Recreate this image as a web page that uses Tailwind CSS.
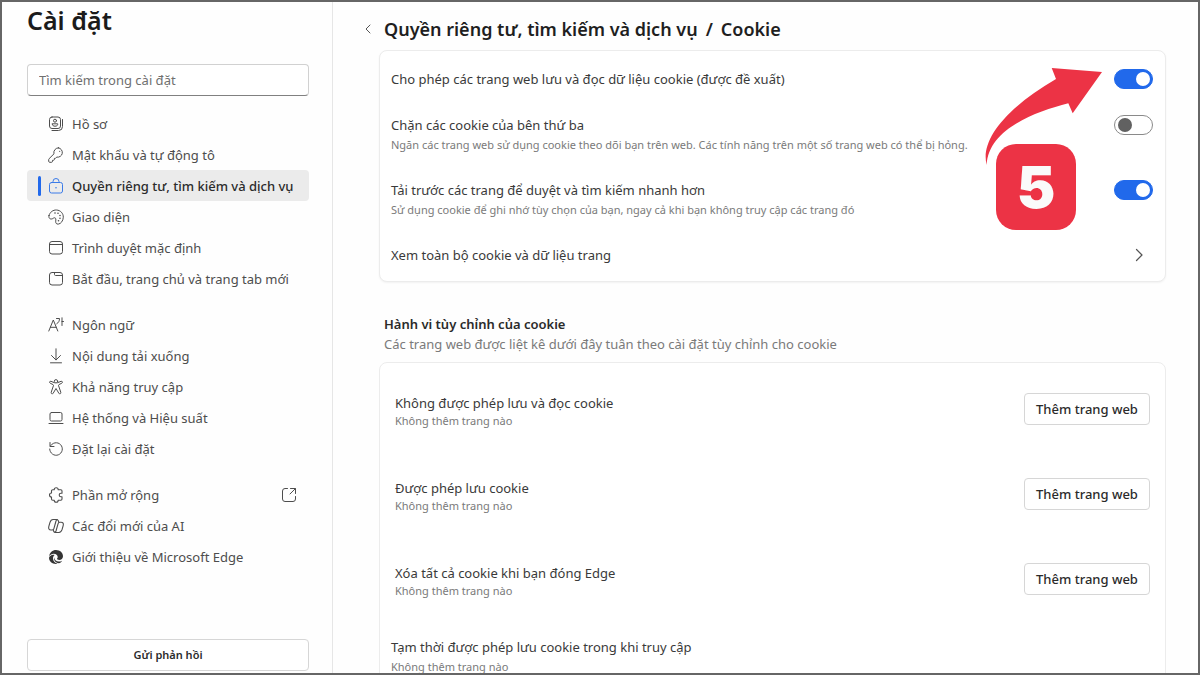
<!DOCTYPE html>
<html lang="vi">
<head>
    <meta charset="UTF-8">
    <meta name="viewport" content="width=device-width, initial-scale=1.0">
    <title>Cài đặt</title>
    <script src="https://cdn.jsdelivr.net/npm/@tailwindcss/browser@4"></script>
</head>
<body class="h-screen flex overflow-hidden border-2 border-[#666666] bg-[#fefefe] text-[#3a3a3a] font-['Noto_Sans',sans-serif] text-[13px] leading-5">
    <!-- Sidebar -->
    <aside class="w-[331px] shrink-0 flex flex-col border-r border-[#e6e6e6] pl-[25px] pr-[23px]">
        <h1 class="text-[25px] leading-9 font-semibold text-[#1b1b1b]">Cài đặt</h1>
        <input type="search" aria-label="Tìm kiếm trong cài đặt" placeholder="Tìm kiếm trong cài đặt" class="mt-[26px] h-8 w-full shrink-0 rounded border border-[#d1d1d1] border-b-[#808080] bg-white px-[11px] placeholder:text-[#707070]">

        <nav class="mt-3 flex flex-col text-[#4d4d4d]">
            <a href="#" class="flex h-[31px] items-center gap-2 pl-[21px]">
                <svg class="size-4" viewBox="0 0 16 16" fill="none" stroke="currentColor" stroke-linecap="round" stroke-linejoin="round">
                    <rect x="1.500" y="1" width="11" height="11.500" rx="2.500"/>
                    <circle cx="7" cy="4.700" r="1.500"/>
                    <path d="M4.300 7.800h5.400v.7c0 1-1.200 1.700-2.700 1.700s-2.700-.7-2.700-1.700zM14.500 3.500v7a4 4 0 0 1-4 4H4"/>
                </svg>
                <span>Hồ sơ</span>
            </a>
            <a href="#" class="flex h-[31px] items-center gap-2 pl-[21px]">
                <svg class="size-4" viewBox="0 0 16 16" fill="none" stroke="currentColor" stroke-linecap="round" stroke-linejoin="round">
                    <path d="M10.500 .8a4.700 4.700 0 0 0-4.500 6L1.100 11.700c-.3.3-.4.600-.4 1v1.600c0 .6.400 1 1 1h1.800c.6 0 1-.4 1-1v-1h1c.5 0 .9-.4.900-.9v-1h1l1.300-1.300a4.700 4.700 0 1 0 1.800-9.300z"/>
                    <circle cx="11.700" cy="4.300" r=".6" fill="currentColor" stroke="none"/>
                </svg>
                <span>Mật khẩu và tự động tô</span>
            </a>
            <a href="#" aria-current="page" class="flex h-[31px] items-center rounded bg-[#ebebeb] pl-[11px] font-medium text-[#2b2b2b]">
                <span class="mr-[7px] h-5 w-[3px] rounded-full bg-[#2169eb]"></span>
                <svg class="mr-2 size-4 text-[#3b7be8]" viewBox="0 0 16 16" fill="none" stroke="currentColor" stroke-linecap="round">
                    <rect x="1.500" y="4.500" width="13" height="10.500" rx="2"/>
                    <path d="M5 4.500V3.500a3 3 0 0 1 6 0v1"/>
                    <circle cx="8" cy="9.800" r=".8" fill="currentColor" stroke="none"/>
                </svg>
                <span>Quyền riêng tư, tìm kiếm và dịch vụ</span>
            </a>
            <a href="#" class="flex h-[31px] items-center gap-2 pl-[21px]">
                <svg class="size-4" viewBox="0 0 16 16" fill="none" stroke="currentColor" stroke-linecap="round" stroke-linejoin="round">
                    <path d="M1 6.500C1.800 3.200 5 .8 8.500 1c4 .2 6.900 3.400 6.800 7.200-.1 3.500-2.300 6.600-5 6.900-1.900.2-2.800-1.100-2.600-2.900.2-1.600.3-2.900-.6-3.300-.8-.4-1.400.1-2.400.7C2.600 10.700.2 9.600 1 6.500z"/>
                    <g fill="currentColor" stroke="none"><circle cx="7" cy="4" r=".8"/><circle cx="10" cy="4.200" r=".8"/><circle cx="12" cy="6.500" r=".8"/><circle cx="12" cy="9.300" r=".8"/><circle cx="10.500" cy="11.800" r=".8"/></g>
                </svg>
                <span>Giao diện</span>
            </a>
            <a href="#" class="flex h-[31px] items-center gap-2 pl-[21px]">
                <svg class="size-4" viewBox="0 0 16 16" fill="none" stroke="currentColor">
                    <rect x="1.500" y="1.500" width="13" height="12.500" rx="2.500"/>
                    <path d="M1.500 4.500h13"/>
                </svg>
                <span>Trình duyệt mặc định</span>
            </a>
            <a href="#" class="flex h-[31px] items-center gap-2 pl-[21px]">
                <svg class="size-4" viewBox="0 0 16 16" fill="none" stroke="currentColor">
                    <rect x="1.500" y="1.500" width="13" height="12.500" rx="2.500"/>
                    <path d="M6.500 1.500v2c0 .6.400 1 1 1h7"/>
                </svg>
                <span>Bắt đầu, trang chủ và trang tab mới</span>
            </a>
            <a href="#" class="mt-[15px] flex h-[31px] items-center gap-2 pl-[21px]">
                <svg class="size-4" viewBox="0 0 16 16" fill="none" stroke="currentColor" stroke-linecap="round" stroke-linejoin="round">
                    <path d="M.8 14 5.300 3l4.500 11M2.400 10.300h5.800M8.500 1.500h3c0 2.500-.8 4-2.700 5.200M14 .8v7.700M14 4.500h1.500"/>
                </svg>
                <span>Ngôn ngữ</span>
            </a>
            <a href="#" class="flex h-[31px] items-center gap-2 pl-[21px]">
                <svg class="size-4" viewBox="0 0 16 16" fill="none" stroke="currentColor" stroke-linecap="round" stroke-linejoin="round">
                    <path d="M8 .8v11M3.500 7.500 8 12l4.500-4.500M2.500 14.800h11"/>
                </svg>
                <span>Nội dung tải xuống</span>
            </a>
            <a href="#" class="flex h-[31px] items-center gap-2 pl-[21px]">
                <svg class="size-4" viewBox="0 0 16 16" fill="none" stroke="currentColor" stroke-linecap="round" stroke-linejoin="round">
                    <circle cx="8" cy="2.300" r="1.700"/>
                    <path d="M6.300 3.700 3 2.300c-1.400-.5-2 1.300-.8 1.900L5 5.600c.4.200.6.500.5.900L3.200 13.300c-.4 1.500 1.400 2.200 2 .9L8 9.500l2.800 4.700c.6 1.300 2.400.6 2-.9L10.500 6.500c-.1-.4.100-.7.500-.9l2.800-1.400c1.200-.6.600-2.400-.8-1.900L9.700 3.700"/>
                </svg>
                <span>Khả năng truy cập</span>
            </a>
            <a href="#" class="flex h-[31px] items-center gap-2 pl-[21px]">
                <svg class="size-4" viewBox="0 0 16 16" fill="none" stroke="currentColor" stroke-linecap="round">
                    <rect x="2" y="2.500" width="12" height="8.500" rx="1.500"/>
                    <path d="M1 13.500h14"/>
                </svg>
                <span>Hệ thống và Hiệu suất</span>
            </a>
            <a href="#" class="flex h-[31px] items-center gap-2 pl-[21px]">
                <svg class="size-4" viewBox="0 0 16 16" fill="none" stroke="currentColor" stroke-linecap="round" stroke-linejoin="round">
                    <path d="M2 1.500v4h4M2.300 5.300A6.300 6.300 0 1 1 1.700 8"/>
                </svg>
                <span>Đặt lại cài đặt</span>
            </a>
            <a href="#" class="mt-[15px] flex h-[31px] items-center gap-2 pl-[21px]">
                <svg class="size-4" viewBox="0 0 16 16" fill="none" stroke="currentColor" stroke-width="1.100" stroke-linecap="round" stroke-linejoin="round">
                    <path d="M6.200 2.800a2 2 0 0 1 4 0h2.600c.7 0 1.200.5 1.200 1.200v2.200h-1a1.800 1.800 0 0 0 0 3.600h1V12c0 .7-.5 1.200-1.200 1.200h-2.600a2 2 0 0 1-4 0H4.700c-.7 0-1.200-.5-1.200-1.200v-2a2 2 0 0 1 0-4V4c0-.7.500-1.200 1.200-1.200z"/>
                </svg>
                <span>Phần mở rộng</span>
                <svg class="ml-auto mr-3 size-4" viewBox="0 0 16 16" fill="none" stroke="currentColor" stroke-linecap="round" stroke-linejoin="round">
                    <path d="M6.500 1.500H4A2.500 2.500 0 0 0 1.500 4v8A2.500 2.500 0 0 0 4 14.500h8a2.500 2.500 0 0 0 2.500-2.500V9.500M9.500 1.500h5v5M14.300 1.700 9 7"/>
                </svg>
            </a>
            <a href="#" class="flex h-[31px] items-center gap-2 pl-[21px]">
                <svg class="size-4" viewBox="0 0 16 16" fill="none" stroke="currentColor" stroke-width="1.100" stroke-linecap="round" stroke-linejoin="round">
                    <path d="M10.800 4.300 10.300 2.700C10 1.900 9.500 1.500 8.700 1.500H5C3.300 1.500 2.500 2.700 1.900 4.600L.9 8.200C.2 10.700 1 12 3 12h1.200c.9 0 1.500-.5 1.700-1.300L8 3c.3-.9.700-1.500 1.500-1.500"/>
                    <path d="M5.200 11.700l.5 1.600c.3.800.8 1.200 1.600 1.200H11c1.700 0 2.500-1.200 3.100-3.100l1-3.600C15.800 5.300 15 4.300 13 4.300h-1.200c-.9 0-1.500.5-1.700 1.300L8 13c-.3.900-.7 1.500-1.500 1.500"/>
                </svg>
                <span>Các đổi mới của AI</span>
            </a>
            <a href="#" class="flex h-[31px] items-center gap-2 pl-[21px]">
                <svg class="size-4" viewBox="0 0 16 16" fill="#333333">
                    <path d="M1.200 7.200C1.500 3.700 4.500 1 8 1c4 0 7 2.900 7 6.200 0 2.200-1.700 3.700-3.700 3.700-1.500 0-2.300-.6-2.300-1.100 0-.4.700-.7.700-1.800 0-1.800-1.700-3.300-4-3.300-1.900 0-3.600 1-4.500 2.500z"/>
                    <path d="M1 8.800C1.500 7 3.200 5.700 5.300 5.700c.5 0 1 .1 1.400.2C5.600 6.600 5 7.800 5 9.200c0 2.700 1.900 5 4.600 5.600-.5.100-1 .2-1.600.2-3.900 0-7-2.800-7-6.200z"/>
                    <path d="M6.200 8.600c0 2.200 1.900 4 4.600 4 1.200 0 2.300-.3 3.300-.9-.8 1.300-1.900 2.200-3.200 2.500-2.700-.3-4.900-2.400-4.900-4.800 0-.3.100-.6.200-.8z"/>
                </svg>
                <span>Giới thiệu về Microsoft Edge</span>
            </a>
        </nav>

        <button type="button" class="mt-auto mb-0.5 h-8 w-full shrink-0 rounded border border-[#d6d6d6] bg-white text-[11px] font-semibold text-[#2b2b2b]">Gửi phản hồi</button>
    </aside>

    <!-- Main Content -->
    <main class="min-w-0 flex-1 overflow-hidden pl-[46px] pr-8">
        <header class="relative flex h-12 items-center pt-1.5 pl-[5px]">
            <button type="button" aria-label="Quay lại" class="absolute -left-4">
                <svg class="size-3 text-[#555555]" viewBox="0 0 12 12" fill="none" stroke="currentColor" stroke-linecap="round" stroke-linejoin="round"><path d="M7 2 3 6l4 4"/></svg>
            </button>
            <h2 class="flex gap-2 text-[18px] leading-7 font-semibold text-[#1f1f1f]">
                <span>Quyền riêng tư, tìm kiếm và dịch vụ</span>
                <span>/</span>
                <span>Cookie</span>
            </h2>
        </header>

        <section class="relative flex flex-col gap-[26px] rounded-lg border border-[#ececec] bg-white pt-[18px] pr-3 pb-4 pl-[11px] shadow-xs">
            <div class="flex justify-between">
                <label for="allow">Cho phép các trang web lưu và đọc dữ liệu cookie (được đề xuất)</label>
                <input id="allow" type="checkbox" role="switch" checked class="flex h-5 w-[39px] shrink-0 appearance-none items-center rounded-full border border-[#8a8a8a] px-[3px] before:size-3.5 before:rounded-full before:bg-[#616161] checked:justify-end checked:border-[#2169eb] checked:bg-[#2169eb] checked:px-0.5 checked:before:bg-white">
            </div>
            <div class="flex justify-between">
                <div>
                    <label for="block" class="block">Chặn các cookie của bên thứ ba</label>
                    <p class="mt-px text-[11px] leading-[18px] text-[#7a7a7a]">Ngăn các trang web sử dụng cookie theo dõi bạn trên web. Các tính năng trên một số trang web có thể bị hỏng.</p>
                </div>
                <input id="block" type="checkbox" role="switch" class="flex h-5 w-[39px] shrink-0 appearance-none items-center rounded-full border border-[#8a8a8a] px-[3px] before:size-3.5 before:rounded-full before:bg-[#616161] checked:justify-end checked:border-[#2169eb] checked:bg-[#2169eb] checked:px-0.5 checked:before:bg-white">
            </div>
            <div class="flex justify-between">
                <div>
                    <label for="preload" class="block">Tải trước các trang để duyệt và tìm kiếm nhanh hơn</label>
                    <p class="mt-px text-[11px] leading-[18px] text-[#7a7a7a]">Sử dụng cookie để ghi nhớ tùy chọn của bạn, ngay cả khi bạn không truy cập các trang đó</p>
                </div>
                <input id="preload" type="checkbox" role="switch" checked class="flex h-5 w-[39px] shrink-0 appearance-none items-center rounded-full border border-[#8a8a8a] px-[3px] before:size-3.5 before:rounded-full before:bg-[#616161] checked:justify-end checked:border-[#2169eb] checked:bg-[#2169eb] checked:px-0.5 checked:before:bg-white">
            </div>
            <a href="#" class="flex items-center justify-between">
                <span>Xem toàn bộ cookie và dữ liệu trang</span>
                <svg class="mr-[7px] size-3.5 text-[#555555]" viewBox="0 0 14 14" fill="none" stroke="currentColor" stroke-width="1.200" stroke-linecap="round" stroke-linejoin="round"><path d="M4.500 1.500 10 7l-5.500 5.500"/></svg>
            </a>

            <!-- Step marker -->
            <div class="pointer-events-none absolute top-[17px] right-[63px] flex h-[162px] w-[118px] items-end pl-3">
                <svg class="absolute inset-0" viewBox="0 0 118 162" fill="#ec3345"><path d="M2.700 97C-4 72 22 40 72 11L67.700 0 118 4 88.700 45.300l-4.400-10C50 44 4 62 2.700 97z"/></svg>
                <span class="flex h-[86px] w-20 items-center justify-center rounded-[20px] bg-[#ec3345] font-['Inter',sans-serif] text-[58px] leading-none font-black text-[#fafafa]">5</span>
            </div>
        </section>

        <h3 class="mt-8 pl-[5px] font-semibold text-[#2b2b2b]">Hành vi tùy chỉnh của cookie</h3>
        <p class="pl-[5px] text-[#7a7a7a]">Các trang web được liệt kê dưới đây tuân theo cài đặt tùy chỉnh cho cookie</p>

        <section class="mt-2 rounded-lg border border-[#ececec] bg-white pt-[30px] pr-[15px] pb-8 pl-[15px]">
            <div class="flex h-[85px] items-start justify-between">
                <div>
                    <h4>Không được phép lưu và đọc cookie</h4>
                    <p class="text-[11px] leading-4 text-[#7a7a7a]">Không thêm trang nào</p>
                </div>
                <button type="button" class="h-8 w-[126px] rounded border border-[#d6d6d6] bg-white font-medium text-[#2b2b2b]">Thêm trang web</button>
            </div>
            <div class="flex h-[85px] items-start justify-between">
                <div>
                    <h4>Được phép lưu cookie</h4>
                    <p class="text-[11px] leading-4 text-[#7a7a7a]">Không thêm trang nào</p>
                </div>
                <button type="button" class="h-8 w-[126px] rounded border border-[#d6d6d6] bg-white font-medium text-[#2b2b2b]">Thêm trang web</button>
            </div>
            <div class="flex h-[74px] items-start justify-between">
                <div>
                    <h4>Xóa tất cả cookie khi bạn đóng Edge</h4>
                    <p class="text-[11px] leading-4 text-[#7a7a7a]">Không thêm trang nào</p>
                </div>
                <button type="button" class="h-8 w-[126px] rounded border border-[#d6d6d6] bg-white font-medium text-[#2b2b2b]">Thêm trang web</button>
            </div>
            <div class="-ml-1">
                <h4>Tạm thời được phép lưu cookie trong khi truy cập</h4>
                <p class="mt-0.5 text-[11px] leading-4 text-[#7a7a7a]">Không thêm trang nào</p>
            </div>
        </section>
    </main>
</body>
</html>
